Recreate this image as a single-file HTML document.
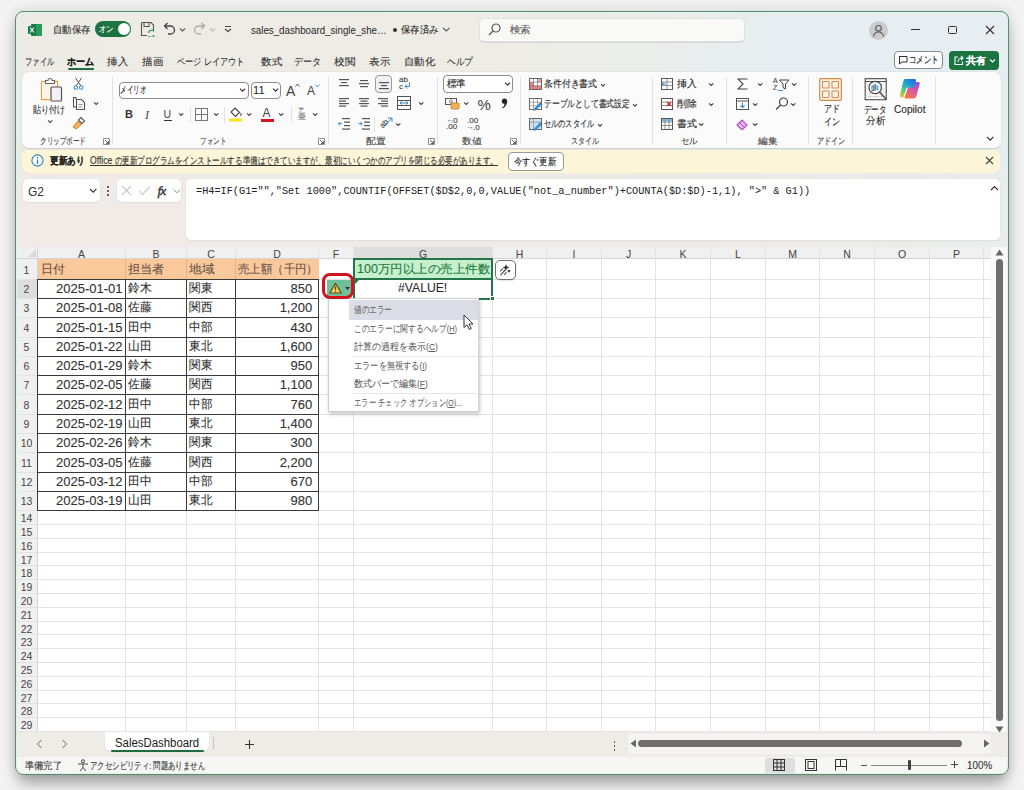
<!DOCTYPE html><html><head><meta charset="utf-8"><style>
*{box-sizing:border-box;margin:0;padding:0}
html,body{width:1024px;height:790px;overflow:hidden}
body{position:relative;background:#f3f3f3;font-family:"Liberation Sans",sans-serif;color:#262626}
.abs{position:absolute}
.win{position:absolute;left:15px;top:11px;width:994px;height:764px;border-radius:8px;
 background:linear-gradient(90deg,#edebe5 0%,#eeece5 45%,#ebedea 62%,#e6eef1 78%,#e6eef1 100%);box-shadow:0 12px 16px -4px rgba(0,0,0,.32),0 0 14px rgba(0,0,0,.14)}
.t{position:absolute;white-space:nowrap;-webkit-text-stroke:0.12px currentColor}
</style></head><body>
<div class="win"></div><div style="position:absolute;left:0;top:0;width:1024px;height:790px;clip-path:inset(12px 16px 16px 16px round 7px)">
<svg class="abs" style="left:28px;top:24px;" width="14" height="12" viewBox="0 0 14 12"><rect x="3" y="0" width="11" height="12" rx="1" fill="#1f7a45"/><rect x="8" y="0" width="6" height="12" fill="#2a9a5a"/><rect x="0" y="2" width="8" height="8" rx="1" fill="#107c41"/><path d="M2 3.5 L6 8.5 M6 3.5 L2 8.5" stroke="#fff" stroke-width="1.2"/></svg>
<div class="t" id="f1" style="left:52.82px;top:24.75px;font-size:9.5px;height:9.5px;line-height:9.5px;color:#2b2b2b;;transform:scaleX(0.9363);transform-origin:0 0;">自動保存</div>
<div class="abs" style="left:95px;top:21px;width:36px;height:16px;background:#1b7340;border-radius:8px"></div>
<div class="t" id="f2" style="left:98.55px;top:24.50px;font-size:9px;height:9px;line-height:9px;color:#ffffff;;transform:scaleX(0.8278);transform-origin:0 0;">オン</div>
<div class="abs" style="left:118px;top:23px;width:12px;height:12px;background:#fff;border-radius:6px"></div>
<svg class="abs" style="left:140px;top:21px;" width="15" height="16" viewBox="0 0 15 16"><path d="M1.5 1.5 H11 L13.5 4 V10" fill="none" stroke="#555" stroke-width="1.1"/><path d="M1.5 1.5 V14.5 H7" fill="none" stroke="#555" stroke-width="1.1"/><rect x="4" y="1.5" width="5" height="4" fill="none" stroke="#555" stroke-width="1"/><path d="M8.5 12 a3 3 0 0 1 5.5 -1.5 M14 14 a3 3 0 0 1 -5.5 1" fill="none" stroke="#3a9a5a" stroke-width="1.3"/></svg>
<svg class="abs" style="left:162px;top:21px;" width="14" height="16" viewBox="0 0 14 16"><path d="M3 5 H8.5 a4 4 0 0 1 0 8 H6" fill="none" stroke="#444" stroke-width="1.3"/><path d="M5.5 2 L2.5 5 L5.5 8" fill="none" stroke="#444" stroke-width="1.3"/></svg>
<svg class="abs" style="left:178.5px;top:26.5px;" width="7.0" height="5.0" viewBox="0 0 7.0 5.0"><path d="M1 1.5 L3.5 4.0 L6.0 1.5" fill="none" stroke="#555" stroke-width="1.1"/></svg>
<svg class="abs" style="left:193px;top:21px;" width="14" height="16" viewBox="0 0 14 16"><path d="M11 5 H5.5 a4 4 0 0 0 0 8 H8" fill="none" stroke="#aaa" stroke-width="1.3"/><path d="M8.5 2 L11.5 5 L8.5 8" fill="none" stroke="#aaa" stroke-width="1.3"/></svg>
<svg class="abs" style="left:208.5px;top:26.5px;" width="7.0" height="5.0" viewBox="0 0 7.0 5.0"><path d="M1 1.5 L3.5 4.0 L6.0 1.5" fill="none" stroke="#bbb" stroke-width="1.1"/></svg>
<svg class="abs" style="left:224px;top:25px;" width="8" height="8" viewBox="0 0 8 8"><path d="M1 1.5 H7" stroke="#444" stroke-width="1"/><path d="M1 4 L4 6.5 L7 4" fill="none" stroke="#444" stroke-width="1.1"/></svg>
<div class="t" id="f3" style="left:250.83px;top:24.75px;font-size:11.5px;height:11.5px;line-height:11.5px;color:#262626;-webkit-text-stroke:0;transform:scaleX(0.8459);transform-origin:0 0;">sales_dashboard_single_she…</div>
<div class="abs" style="left:393px;top:28px;width:4px;height:4px;background:#333;border-radius:2px"></div>
<div class="t" id="f4" style="left:400.52px;top:24.75px;font-size:9.5px;height:9.5px;line-height:9.5px;color:#262626;;transform:scaleX(0.9363);transform-origin:0 0;">保存済み</div>
<svg class="abs" style="left:441.8px;top:25.8px;" width="8.4" height="6.4" viewBox="0 0 8.4 6.4"><path d="M1 1.9 L4.2 5.1 L7.4 1.9" fill="none" stroke="#444" stroke-width="1.1"/></svg>
<div class="abs" style="left:479px;top:18px;width:266px;height:24px;background:#f9f9f8;border:1px solid #e0e0de;border-radius:5px;box-shadow:0 1px 0 #d8d8d6"></div>
<svg class="abs" style="left:488px;top:23px;" width="13" height="13" viewBox="0 0 13 13"><circle cx="8" cy="5" r="4" fill="none" stroke="#555" stroke-width="1.2"/><path d="M5 8 L1 12" stroke="#555" stroke-width="1.3"/></svg>
<div class="t" id="f5" style="left:509.52px;top:25.25px;font-size:9.5px;height:9.5px;line-height:9.5px;color:#555;;transform:scaleX(1.0475);transform-origin:0 0;">検索</div>
<div class="abs" style="left:869px;top:21px;width:19px;height:19px;background:#c9cbcc;border-radius:50%"></div>
<svg class="abs" style="left:872px;top:24px;" width="13" height="13" viewBox="0 0 13 13"><circle cx="6.5" cy="4.3" r="2.8" fill="none" stroke="#555" stroke-width="1.1"/><path d="M1.5 12.5 a5 4.5 0 0 1 10 0" fill="none" stroke="#555" stroke-width="1.1"/></svg>
<div class="abs" style="left:911px;top:29px;width:9px;height:1px;background:#333"></div>
<div class="abs" style="left:948px;top:26px;width:9px;height:8px;border:1.2px solid #333;border-radius:1.5px"></div>
<svg class="abs" style="left:985px;top:25px;" width="10" height="10" viewBox="0 0 10 10"><path d="M1 1 L9 9 M9 1 L1 9" stroke="#333" stroke-width="1.1"/></svg>
<div class="t" id="f6" style="left:24.5px;top:56.50px;font-size:10px;height:10px;line-height:10px;color:#333;;transform:scaleX(0.7375);transform-origin:0 0;">ファイル</div>
<div class="t" id="f7" style="left:67.0px;top:56.50px;font-size:10px;height:10px;line-height:10px;color:#1a1a1a;font-weight:bold;transform:scaleX(0.9000);transform-origin:0 0;">ホーム</div>
<div class="t" id="f8" style="left:107.0px;top:56.50px;font-size:10px;height:10px;line-height:10px;color:#333;;transform:scaleX(1.0500);transform-origin:0 0;">挿入</div>
<div class="t" id="f9" style="left:142.0px;top:56.50px;font-size:10px;height:10px;line-height:10px;color:#333;;transform:scaleX(1.0500);transform-origin:0 0;">描画</div>
<div class="t" id="f10" style="left:177.0px;top:56.50px;font-size:10px;height:10px;line-height:10px;color:#333;;transform:scaleX(0.8154);transform-origin:0 0;">ページ レイアウト</div>
<div class="t" id="f11" style="left:260.5px;top:56.50px;font-size:10px;height:10px;line-height:10px;color:#333;;transform:scaleX(1.0500);transform-origin:0 0;">数式</div>
<div class="t" id="f12" style="left:293.5px;top:56.50px;font-size:10px;height:10px;line-height:10px;color:#333;;transform:scaleX(0.9000);transform-origin:0 0;">データ</div>
<div class="t" id="f13" style="left:333.5px;top:56.50px;font-size:10px;height:10px;line-height:10px;color:#333;;transform:scaleX(1.0500);transform-origin:0 0;">校閲</div>
<div class="t" id="f14" style="left:368.5px;top:56.50px;font-size:10px;height:10px;line-height:10px;color:#333;;transform:scaleX(1.0500);transform-origin:0 0;">表示</div>
<div class="t" id="f15" style="left:403.5px;top:56.50px;font-size:10px;height:10px;line-height:10px;color:#333;;transform:scaleX(1.0333);transform-origin:0 0;">自動化</div>
<div class="t" id="f16" style="left:447.0px;top:56.50px;font-size:10px;height:10px;line-height:10px;color:#333;;transform:scaleX(0.8667);transform-origin:0 0;">ヘルプ</div>
<div class="abs" style="left:68px;top:67.5px;width:26px;height:2.5px;background:#1d6b3e;border-radius:1px"></div>
<div class="abs" style="left:894px;top:51px;width:49px;height:18px;background:#fbfbfb;border:1px solid #8a8a8a;border-radius:4px"></div>
<svg class="abs" style="left:898px;top:55px;" width="10" height="10" viewBox="0 0 10 10"><path d="M1 1.5 H9 V7 H4 L1.5 9 V1.5 Z" fill="none" stroke="#333" stroke-width="1"/></svg>
<div class="t" id="f17" style="left:908.52px;top:55.25px;font-size:9.5px;height:9.5px;line-height:9.5px;color:#222;;transform:scaleX(0.7488);transform-origin:0 0;">コメント</div>
<div class="abs" style="left:949px;top:51px;width:50px;height:19px;background:#1b7340;border-radius:4px"></div>
<svg class="abs" style="left:953px;top:55px;" width="11" height="11" viewBox="0 0 11 11"><path d="M5 2 H2 V9.5 H9.5 V6.5" fill="none" stroke="#fff" stroke-width="1.1"/><path d="M5 7 a4 4 0 0 1 4 -4 H10 M8 1 L10 3 L8 5" fill="none" stroke="#fff" stroke-width="1.1"/></svg>
<div class="t" id="f18" style="left:965.5px;top:55.50px;font-size:10px;height:10px;line-height:10px;color:#fff;font-weight:bold;transform:scaleX(1.0000);transform-origin:0 0;">共有</div>
<svg class="abs" style="left:988.5px;top:57.5px;" width="7.0" height="5.0" viewBox="0 0 7.0 5.0"><path d="M1 1.5 L3.5 4.0 L6.0 1.5" fill="none" stroke="#fff" stroke-width="1.1"/></svg>
<div class="abs" style="left:22px;top:72px;width:979px;height:76px;background:#fbfbfb;border-radius:7px;box-shadow:0 0.5px 1.5px rgba(0,0,0,.15)"></div>
<div class="abs" style="left:111.5px;top:77px;width:1px;height:67px;background:#e1e1e1"></div>
<div class="abs" style="left:328px;top:77px;width:1px;height:67px;background:#e1e1e1"></div>
<div class="abs" style="left:437px;top:77px;width:1px;height:67px;background:#e1e1e1"></div>
<div class="abs" style="left:520px;top:77px;width:1px;height:67px;background:#e1e1e1"></div>
<div class="abs" style="left:652px;top:77px;width:1px;height:67px;background:#e1e1e1"></div>
<div class="abs" style="left:726px;top:77px;width:1px;height:67px;background:#e1e1e1"></div>
<div class="abs" style="left:808px;top:77px;width:1px;height:67px;background:#e1e1e1"></div>
<div class="abs" style="left:852px;top:77px;width:1px;height:67px;background:#e1e1e1"></div>
<div class="abs" style="left:934.5px;top:77px;width:1px;height:67px;background:#e1e1e1"></div>
<div class="t" id="f19" style="left:39.95px;top:137.00px;font-size:9px;height:9px;line-height:9px;color:#444;;transform:scaleX(0.7286);transform-origin:0 0;">クリップボード</div>
<div class="t" id="f20" style="left:199.95px;top:137.00px;font-size:9px;height:9px;line-height:9px;color:#444;;transform:scaleX(0.7361);transform-origin:0 0;">フォント</div>
<div class="t" id="f21" style="left:366.15px;top:137.00px;font-size:9px;height:9px;line-height:9px;color:#444;;transform:scaleX(1.0944);transform-origin:0 0;">配置</div>
<div class="t" id="f22" style="left:461.55px;top:137.00px;font-size:9px;height:9px;line-height:9px;color:#444;;transform:scaleX(1.0889);transform-origin:0 0;">数値</div>
<div class="t" id="f23" style="left:570.85px;top:137.00px;font-size:9px;height:9px;line-height:9px;color:#444;;transform:scaleX(0.7806);transform-origin:0 0;">スタイル</div>
<div class="t" id="f24" style="left:680.55px;top:137.00px;font-size:9px;height:9px;line-height:9px;color:#444;;transform:scaleX(0.9389);transform-origin:0 0;">セル</div>
<div class="t" id="f25" style="left:758.05px;top:137.00px;font-size:9px;height:9px;line-height:9px;color:#444;;transform:scaleX(1.0778);transform-origin:0 0;">編集</div>
<div class="t" id="f26" style="left:816.55px;top:137.00px;font-size:9px;height:9px;line-height:9px;color:#444;;transform:scaleX(0.7889);transform-origin:0 0;">アドイン</div>
<svg class="abs" style="left:103px;top:138px;" width="7" height="7" viewBox="0 0 7 7"><path d="M0.5 0.5 H6.5 V6.5 H0.5 Z" fill="none" stroke="#777" stroke-width=".8"/><path d="M2 2 L5.5 5.5 M5.5 3 V5.5 H3" fill="none" stroke="#555" stroke-width=".9"/></svg>
<svg class="abs" style="left:318px;top:138px;" width="7" height="7" viewBox="0 0 7 7"><path d="M0.5 0.5 H6.5 V6.5 H0.5 Z" fill="none" stroke="#777" stroke-width=".8"/><path d="M2 2 L5.5 5.5 M5.5 3 V5.5 H3" fill="none" stroke="#555" stroke-width=".9"/></svg>
<svg class="abs" style="left:428px;top:138px;" width="7" height="7" viewBox="0 0 7 7"><path d="M0.5 0.5 H6.5 V6.5 H0.5 Z" fill="none" stroke="#777" stroke-width=".8"/><path d="M2 2 L5.5 5.5 M5.5 3 V5.5 H3" fill="none" stroke="#555" stroke-width=".9"/></svg>
<svg class="abs" style="left:510px;top:138px;" width="7" height="7" viewBox="0 0 7 7"><path d="M0.5 0.5 H6.5 V6.5 H0.5 Z" fill="none" stroke="#777" stroke-width=".8"/><path d="M2 2 L5.5 5.5 M5.5 3 V5.5 H3" fill="none" stroke="#555" stroke-width=".9"/></svg>
<svg class="abs" style="left:39px;top:77px;" width="24" height="26" viewBox="0 0 24 26"><path d="M2.5 4.5 H7 M15 4.5 H18.5 V10" fill="none" stroke="#e5a44a" stroke-width="1.3"/><path d="M2.5 4.5 V22.5 H11" fill="none" stroke="#e5a44a" stroke-width="1.3"/><rect x="3.2" y="5.2" width="14.6" height="16.6" fill="#fdf5e8"/><path d="M6.5 6.5 V3.5 H9 a2 2 0 0 1 4 0 H15.5 V6.5 Z" fill="#fff" stroke="#666" stroke-width="1.1"/><rect x="12" y="10" width="10.5" height="14" rx="1" fill="#f2f2f7" stroke="#555" stroke-width="1.2"/></svg>
<div class="t" id="f27" style="left:32.92px;top:105.45px;font-size:9.5px;height:9.5px;line-height:9.5px;color:#333;;transform:scaleX(0.8037);transform-origin:0 0;">貼り付け</div>
<svg class="abs" style="left:46.8px;top:119.3px;" width="6.4" height="4.4" viewBox="0 0 6.4 4.4"><path d="M1 1.3 L3.2 3.5 L5.4 1.3" fill="none" stroke="#444" stroke-width="1.1"/></svg>
<svg class="abs" style="left:73px;top:77px;" width="11" height="13" viewBox="0 0 11 13"><path d="M2.5 1 L8 9 M8.5 1 L3 9" stroke="#555" stroke-width="1"/><circle cx="2.8" cy="10.5" r="1.8" fill="none" stroke="#3d8ec9" stroke-width="1.1"/><circle cx="8.2" cy="10.5" r="1.8" fill="none" stroke="#3d8ec9" stroke-width="1.1"/></svg>
<svg class="abs" style="left:72px;top:96px;" width="14" height="15" viewBox="0 0 14 15"><path d="M4 3 V1.5 H1.5 V11 H4" fill="none" stroke="#555" stroke-width="1.1"/><path d="M4.5 3.5 H9.5 L12.5 6.5 V13.5 H4.5 Z" fill="none" stroke="#555" stroke-width="1.1"/><path d="M6.5 8.5 H10.5 M6.5 11 H10.5" stroke="#777" stroke-width=".8"/></svg>
<svg class="abs" style="left:93.3px;top:101.3px;" width="6.4" height="4.4" viewBox="0 0 6.4 4.4"><path d="M1 1.3 L3.2 3.5 L5.4 1.3" fill="none" stroke="#444" stroke-width="1.1"/></svg>
<svg class="abs" style="left:72px;top:116px;" width="14" height="14" viewBox="0 0 14 14"><path d="M9 1.5 L12.5 5 L10 7.5 L6.5 4 Z" fill="#fff" stroke="#555" stroke-width="1.1"/><path d="M6 5 L1 11 L4 13 L9.5 8.5 Z" fill="#f2b05a" stroke="#c77a1a" stroke-width=".9"/></svg>
<div class="abs" style="left:119px;top:81.5px;width:130px;height:17.5px;background:#fff;border:1px solid #8c8c8c;border-radius:4px"></div>
<div class="t" id="f28" style="left:120.23px;top:85.25px;font-size:9.5px;height:9.5px;line-height:9.5px;color:#222;;transform:scaleX(0.6562);transform-origin:0 0;">メイリオ</div>
<svg class="abs" style="left:239.4px;top:87.4px;" width="7.2" height="5.2" viewBox="0 0 7.2 5.2"><path d="M1 1.6 L3.6 4.2 L6.2 1.6" fill="none" stroke="#333" stroke-width="1.1"/></svg>
<div class="abs" style="left:251px;top:81.5px;width:30px;height:17.5px;background:#fff;border:1px solid #8c8c8c;border-radius:4px"></div>
<div class="t" id="f29" style="left:252.95px;top:85.00px;font-size:11px;height:11px;line-height:11px;color:#222;-webkit-text-stroke:0;transform:scaleX(1.0156);transform-origin:0 0;">11</div>
<svg class="abs" style="left:272.4px;top:87.4px;" width="7.2" height="5.2" viewBox="0 0 7.2 5.2"><path d="M1 1.6 L3.6 4.2 L6.2 1.6" fill="none" stroke="#333" stroke-width="1.1"/></svg>
<div class="t" style="left:286px;top:83.50px;font-size:14px;height:14px;line-height:14px;color:#444;-webkit-text-stroke:0;">A</div>
<svg class="abs" style="left:295px;top:83px;" width="5" height="4" viewBox="0 0 5 4"><path d="M0.5 3.5 L2.5 1 L4.5 3.5" fill="none" stroke="#444" stroke-width=".9"/></svg>
<div class="t" style="left:307px;top:85.00px;font-size:12px;height:12px;line-height:12px;color:#444;-webkit-text-stroke:0;">A</div>
<svg class="abs" style="left:315px;top:84px;" width="5" height="4" viewBox="0 0 5 4"><path d="M0.5 0.5 L2.5 3 L4.5 0.5" fill="none" stroke="#3d8ec9" stroke-width=".9"/></svg>
<div class="t" style="left:125px;top:109.00px;font-size:11px;height:11px;line-height:11px;color:#333;font-weight:bold;-webkit-text-stroke:0;">B</div>
<div class="t" style="left:145px;top:108.50px;font-size:12px;height:12px;line-height:12px;color:#444;font-style:italic;font-family:'Liberation Serif',serif;-webkit-text-stroke:0;">I</div>
<div class="t" style="left:163.5px;top:108.75px;font-size:10.5px;height:10.5px;line-height:10.5px;color:#444;-webkit-text-stroke:0;">U</div>
<div class="abs" style="left:163.5px;top:120px;width:8px;height:1px;background:#333"></div>
<svg class="abs" style="left:178.3px;top:111.8px;" width="6.4" height="4.4" viewBox="0 0 6.4 4.4"><path d="M1 1.3 L3.2 3.5 L5.4 1.3" fill="none" stroke="#444" stroke-width="1.1"/></svg>
<div class="abs" style="left:190px;top:107px;width:1px;height:16px;background:#e1e1e1"></div>
<svg class="abs" style="left:195px;top:108px;" width="13" height="13" viewBox="0 0 13 13"><rect x="0.5" y="0.5" width="12" height="12" fill="none" stroke="#777" stroke-width="1"/><path d="M6.5 0.5 V12.5 M0.5 6.5 H12.5" stroke="#777" stroke-width="1"/></svg>
<svg class="abs" style="left:212.8px;top:111.8px;" width="6.4" height="4.4" viewBox="0 0 6.4 4.4"><path d="M1 1.3 L3.2 3.5 L5.4 1.3" fill="none" stroke="#444" stroke-width="1.1"/></svg>
<div class="abs" style="left:224px;top:107px;width:1px;height:16px;background:#e1e1e1"></div>
<svg class="abs" style="left:229px;top:106px;" width="14" height="16" viewBox="0 0 14 16"><path d="M6 2 L10.5 6.5 L6.5 10.5 L2 6 Z" fill="#fff" stroke="#444" stroke-width="1.1"/><path d="M11.5 7 q1.5 2 0 3" fill="none" stroke="#444" stroke-width="1"/><rect x="0" y="12.5" width="13" height="3" fill="#f7e51e"/></svg>
<svg class="abs" style="left:246.3px;top:111.8px;" width="6.4" height="4.4" viewBox="0 0 6.4 4.4"><path d="M1 1.3 L3.2 3.5 L5.4 1.3" fill="none" stroke="#444" stroke-width="1.1"/></svg>
<div class="t" style="left:262.5px;top:106.50px;font-size:12px;height:12px;line-height:12px;color:#444;-webkit-text-stroke:0;">A</div>
<div class="abs" style="left:261px;top:118.5px;width:13px;height:3px;background:#d3161f"></div>
<svg class="abs" style="left:277.8px;top:111.8px;" width="6.4" height="4.4" viewBox="0 0 6.4 4.4"><path d="M1 1.3 L3.2 3.5 L5.4 1.3" fill="none" stroke="#444" stroke-width="1.1"/></svg>
<div class="abs" style="left:291px;top:107px;width:1px;height:16px;background:#e1e1e1"></div>
<div class="t" style="left:298px;top:106.50px;font-size:6px;height:6px;line-height:6px;color:#666;;">ア</div>
<div class="t" style="left:297.5px;top:113.00px;font-size:8px;height:8px;line-height:8px;color:#666;;">亜</div>
<svg class="abs" style="left:311.8px;top:111.8px;" width="6.4" height="4.4" viewBox="0 0 6.4 4.4"><path d="M1 1.3 L3.2 3.5 L5.4 1.3" fill="none" stroke="#444" stroke-width="1.1"/></svg>
<svg class="abs" style="left:338.5px;top:79px;" width="14" height="11" viewBox="0 0 14 11"><rect x="0" y="0" width="10" height="1.2" fill="#555"/><rect x="2" y="3" width="6" height="1.2" fill="#555"/><rect x="0" y="6" width="10" height="1.2" fill="#555"/></svg>
<svg class="abs" style="left:359px;top:80px;" width="14" height="11" viewBox="0 0 14 11"><rect x="1" y="0" width="8" height="1.2" fill="#555"/><rect x="0" y="3" width="10" height="1.2" fill="#555"/><rect x="1" y="6" width="8" height="1.2" fill="#555"/></svg>
<div class="abs" style="left:374.5px;top:75px;width:17px;height:17.5px;background:#f0f0f0;border:1px solid #9a9a9a;border-radius:4px"></div>
<svg class="abs" style="left:378.5px;top:82px;" width="14" height="11" viewBox="0 0 14 11"><rect x="0" y="0" width="10" height="1.2" fill="#555"/><rect x="2" y="3" width="6" height="1.2" fill="#555"/><rect x="0" y="6" width="10" height="1.2" fill="#555"/></svg>
<div class="t" style="left:399px;top:75.50px;font-size:8px;height:8px;line-height:8px;color:#444;;">ab</div>
<div class="t" style="left:399px;top:82.50px;font-size:8px;height:8px;line-height:8px;color:#444;;">c</div>
<svg class="abs" style="left:403px;top:82px;" width="8" height="9" viewBox="0 0 8 9"><path d="M6.5 0.5 V4.5 H2 M4 2.5 L2 4.5 L4 6.5" fill="none" stroke="#3d8ec9" stroke-width="1"/></svg>
<svg class="abs" style="left:338.5px;top:98px;" width="14" height="12.0" viewBox="0 0 14 12.0"><rect x="0" y="0.0" width="10" height="1.2" fill="#555"/><rect x="0" y="2.5" width="7" height="1.2" fill="#555"/><rect x="0" y="5.0" width="10" height="1.2" fill="#555"/><rect x="0" y="7.5" width="7" height="1.2" fill="#555"/></svg>
<svg class="abs" style="left:358.5px;top:98px;" width="14" height="12.0" viewBox="0 0 14 12.0"><rect x="0" y="0.0" width="10" height="1.2" fill="#555"/><rect x="1.5" y="2.5" width="7" height="1.2" fill="#555"/><rect x="0" y="5.0" width="10" height="1.2" fill="#555"/><rect x="1.5" y="7.5" width="7" height="1.2" fill="#555"/></svg>
<svg class="abs" style="left:378px;top:98px;" width="14" height="12.0" viewBox="0 0 14 12.0"><rect x="0" y="0.0" width="10" height="1.2" fill="#555"/><rect x="3" y="2.5" width="7" height="1.2" fill="#555"/><rect x="0" y="5.0" width="10" height="1.2" fill="#555"/><rect x="3" y="7.5" width="7" height="1.2" fill="#555"/></svg>
<svg class="abs" style="left:397px;top:96px;" width="14" height="14" viewBox="0 0 14 14"><rect x="0.5" y="0.5" width="13" height="13" fill="none" stroke="#555" stroke-width="1"/><path d="M0.5 4.5 H13.5 M0.5 9.5 H13.5" stroke="#555" stroke-width="1"/><path d="M3 7 H11 M5 5.5 L3 7 L5 8.5 M9 5.5 L11 7 L9 8.5" fill="none" stroke="#3d8ec9" stroke-width="1"/></svg>
<svg class="abs" style="left:417.8px;top:100.8px;" width="6.4" height="4.4" viewBox="0 0 6.4 4.4"><path d="M1 1.3 L3.2 3.5 L5.4 1.3" fill="none" stroke="#444" stroke-width="1.1"/></svg>
<svg class="abs" style="left:338px;top:118px;" width="12" height="12" viewBox="0 0 12 12"><rect x="4" y="0" width="8" height="1.2" fill="#555"/><rect x="6" y="3.5" width="6" height="1.2" fill="#555"/><rect x="6" y="7" width="6" height="1.2" fill="#555"/><rect x="4" y="10.5" width="8" height="1.2" fill="#555"/><path d="M0.5 5.7 H4 M2 4 L0.5 5.7 L2 7.4" fill="none" stroke="#3d8ec9" stroke-width="1"/></svg>
<svg class="abs" style="left:358px;top:118px;" width="12" height="12" viewBox="0 0 12 12"><rect x="4" y="0" width="8" height="1.2" fill="#555"/><rect x="6" y="3.5" width="6" height="1.2" fill="#555"/><rect x="6" y="7" width="6" height="1.2" fill="#555"/><rect x="4" y="10.5" width="8" height="1.2" fill="#555"/><path d="M0.5 5.7 H4 M2.5 4 L4 5.7 L2.5 7.4" fill="none" stroke="#3d8ec9" stroke-width="1"/></svg>
<div class="abs" style="left:374px;top:116px;width:1px;height:16px;background:#e1e1e1"></div>
<div class="t" style="left:380px;top:120.00px;font-size:8px;height:8px;line-height:8px;color:#444;transform:rotate(-45deg);">ab</div>
<svg class="abs" style="left:384px;top:117px;" width="9" height="9" viewBox="0 0 9 9"><path d="M1 8 L8 1 M4 1 H8 V5" fill="none" stroke="#3d8ec9" stroke-width="1"/></svg>
<svg class="abs" style="left:395.3px;top:121.8px;" width="6.4" height="4.4" viewBox="0 0 6.4 4.4"><path d="M1 1.3 L3.2 3.5 L5.4 1.3" fill="none" stroke="#444" stroke-width="1.1"/></svg>
<div class="abs" style="left:443px;top:74.5px;width:70px;height:18px;background:#fff;border:1px solid #8c8c8c;border-radius:4px"></div>
<div class="t" id="f30" style="left:446.52px;top:78.75px;font-size:9.5px;height:9.5px;line-height:9.5px;color:#222;;transform:scaleX(0.9475);transform-origin:0 0;">標準</div>
<svg class="abs" style="left:504.4px;top:80.9px;" width="7.2" height="5.2" viewBox="0 0 7.2 5.2"><path d="M1 1.6 L3.6 4.2 L6.2 1.6" fill="none" stroke="#333" stroke-width="1.1"/></svg>
<svg class="abs" style="left:445px;top:97px;" width="15" height="13" viewBox="0 0 15 13"><rect x="0.5" y="1.5" width="11" height="6" fill="none" stroke="#555" stroke-width="1"/><circle cx="6" cy="4.5" r="1.5" fill="none" stroke="#555" stroke-width=".8"/><rect x="6" y="6" width="8" height="6" rx="1" fill="#f2b05a" stroke="#c77a1a" stroke-width=".8"/></svg>
<svg class="abs" style="left:463.3px;top:101.3px;" width="6.4" height="4.4" viewBox="0 0 6.4 4.4"><path d="M1 1.3 L3.2 3.5 L5.4 1.3" fill="none" stroke="#444" stroke-width="1.1"/></svg>
<div class="t" style="left:477.5px;top:96.50px;font-size:15px;height:15px;line-height:15px;color:#444;-webkit-text-stroke:0;">%</div>
<svg class="abs" style="left:501px;top:98px;" width="7" height="11" viewBox="0 0 7 11"><circle cx="3.5" cy="3.2" r="2.6" fill="#222"/><path d="M5.9 3.5 Q6 8 1.5 10.5 L1.2 9.8 Q3.8 8 3.8 5 Z" fill="#222"/></svg>
<div class="t" style="left:446px;top:116.00px;font-size:8px;height:8px;line-height:8px;color:#3d8ec9;;">←</div>
<div class="t" style="left:451px;top:116.50px;font-size:8px;height:8px;line-height:8px;color:#444;;">.0</div>
<div class="t" style="left:446px;top:123.00px;font-size:8px;height:8px;line-height:8px;color:#444;;">.00</div>
<div class="t" style="left:467px;top:116.50px;font-size:8px;height:8px;line-height:8px;color:#444;;">.00</div>
<div class="t" style="left:465.5px;top:123.00px;font-size:8px;height:8px;line-height:8px;color:#3d8ec9;;">→</div>
<div class="t" style="left:473px;top:123.50px;font-size:8px;height:8px;line-height:8px;color:#444;;">.0</div>
<svg class="abs" style="left:528.5px;top:78px;" width="13" height="12" viewBox="0 0 13 12"><rect x="0.5" y="0.5" width="12" height="11" fill="#fff" stroke="#666" stroke-width="1"/><rect x="1" y="4.2" width="3.5" height="7" fill="#f08080"/><rect x="4.5" y="7.8" width="7.5" height="3.4" fill="#f08080"/><rect x="8.5" y="1" width="3.5" height="3.2" fill="#f4a0a0"/><path d="M0.5 4.2 H12.5 M0.5 7.8 H12.5 M4.5 0.5 V11.5 M8.5 0.5 V11.5" stroke="#777" stroke-width=".7"/><rect x="0.5" y="0.5" width="12" height="11" fill="none" stroke="#666" stroke-width="1"/></svg>
<div class="t" id="f31" style="left:543.82px;top:79.25px;font-size:9.5px;height:9.5px;line-height:9.5px;color:#262626;;transform:scaleX(0.8842);transform-origin:0 0;">条件付き書式</div>
<svg class="abs" style="left:599.5px;top:82.5px;" width="6" height="4" viewBox="0 0 6 4"><path d="M1 1.2 L3 3.2 L5 1.2" fill="none" stroke="#444" stroke-width="1.1"/></svg>
<svg class="abs" style="left:528.5px;top:98px;" width="14" height="13" viewBox="0 0 14 13"><rect x="0.5" y="0.5" width="12" height="11" fill="#fff" stroke="#666" stroke-width="1"/><path d="M0.5 4.2 H12.5 M0.5 7.8 H12.5 M4.5 0.5 V11.5 M8.5 0.5 V11.5" stroke="#888" stroke-width=".7"/><path d="M4 11.5 L11 4.5 L13 6.5 L6.5 12.5 H4 Z" fill="#3a8ed6"/><path d="M11 4.5 L13 6.5" stroke="#555" stroke-width="1"/></svg>
<div class="t" id="f32" style="left:543.82px;top:99.00px;font-size:9.5px;height:9.5px;line-height:9.5px;color:#262626;;transform:scaleX(0.7805);transform-origin:0 0;">テーブルとして書式設定</div>
<svg class="abs" style="left:632px;top:102.5px;" width="6" height="4" viewBox="0 0 6 4"><path d="M1 1.2 L3 3.2 L5 1.2" fill="none" stroke="#444" stroke-width="1.1"/></svg>
<svg class="abs" style="left:528.5px;top:118px;" width="14" height="13" viewBox="0 0 14 13"><rect x="0.5" y="0.5" width="12" height="11" fill="#cfe3f5" stroke="#666" stroke-width="1"/><path d="M0.5 4.2 H12.5 M4.5 0.5 V11.5" stroke="#888" stroke-width=".7"/><path d="M4 11.5 L11 4.5 L13 6.5 L6.5 12.5 H4 Z" fill="#3a8ed6"/><path d="M11 4.5 L13 6.5" stroke="#555" stroke-width="1"/></svg>
<div class="t" id="f33" style="left:543.82px;top:119.00px;font-size:9.5px;height:9.5px;line-height:9.5px;color:#262626;;transform:scaleX(0.7164);transform-origin:0 0;">セルのスタイル</div>
<svg class="abs" style="left:597.3px;top:122.5px;" width="6" height="4" viewBox="0 0 6 4"><path d="M1 1.2 L3 3.2 L5 1.2" fill="none" stroke="#444" stroke-width="1.1"/></svg>
<svg class="abs" style="left:661px;top:77.5px;" width="13" height="13" viewBox="0 0 13 13"><rect x="0.5" y="0.5" width="11" height="11" fill="#fff" stroke="#555" stroke-width="1"/><path d="M0.5 4 H11.5 M0.5 7.5 H11.5 M6 0.5 V11.5" stroke="#777" stroke-width=".8"/><path d="M1 6 H5 M3 4.2 L1 6 L3 7.8" fill="none" stroke="#3d8ec9" stroke-width="1"/></svg>
<div class="t" id="f34" style="left:676.52px;top:79.25px;font-size:9.5px;height:9.5px;line-height:9.5px;color:#262626;;transform:scaleX(0.9975);transform-origin:0 0;">挿入</div>
<svg class="abs" style="left:707.8px;top:81.8px;" width="6.4" height="4.4" viewBox="0 0 6.4 4.4"><path d="M1 1.3 L3.2 3.5 L5.4 1.3" fill="none" stroke="#444" stroke-width="1.1"/></svg>
<svg class="abs" style="left:661px;top:97.5px;" width="13" height="13" viewBox="0 0 13 13"><rect x="0.5" y="0.5" width="11" height="11" fill="#fff" stroke="#555" stroke-width="1"/><path d="M0.5 4 H11.5 M0.5 7.5 H11.5" stroke="#777" stroke-width=".8"/><path d="M6 4 L10 8 M10 4 L6 8" stroke="#d3161f" stroke-width="1.1"/></svg>
<div class="t" id="f35" style="left:676.52px;top:99.25px;font-size:9.5px;height:9.5px;line-height:9.5px;color:#262626;;transform:scaleX(0.9975);transform-origin:0 0;">削除</div>
<svg class="abs" style="left:707.8px;top:101.8px;" width="6.4" height="4.4" viewBox="0 0 6.4 4.4"><path d="M1 1.3 L3.2 3.5 L5.4 1.3" fill="none" stroke="#444" stroke-width="1.1"/></svg>
<svg class="abs" style="left:661px;top:117.5px;" width="13" height="13" viewBox="0 0 13 13"><rect x="0.5" y="0.5" width="11" height="11" fill="#fff" stroke="#555" stroke-width="1"/><path d="M0.5 4 H11.5 M0.5 7.5 H11.5 M4 0.5 V11.5 M8 0.5 V11.5" stroke="#777" stroke-width=".8"/><rect x="1" y="1" width="10" height="2.5" fill="#3d8ec9" opacity=".6"/></svg>
<div class="t" id="f36" style="left:676.52px;top:119.25px;font-size:9.5px;height:9.5px;line-height:9.5px;color:#262626;;transform:scaleX(0.9975);transform-origin:0 0;">書式</div>
<svg class="abs" style="left:697.8px;top:121.8px;" width="6.4" height="4.4" viewBox="0 0 6.4 4.4"><path d="M1 1.3 L3.2 3.5 L5.4 1.3" fill="none" stroke="#444" stroke-width="1.1"/></svg>
<svg class="abs" style="left:737px;top:78px;" width="11" height="12" viewBox="0 0 11 12"><path d="M10.5 1 H1 L6 6 L1 11 H10.5" fill="none" stroke="#444" stroke-width="1.1"/></svg>
<svg class="abs" style="left:757.3px;top:81.8px;" width="6.4" height="4.4" viewBox="0 0 6.4 4.4"><path d="M1 1.3 L3.2 3.5 L5.4 1.3" fill="none" stroke="#444" stroke-width="1.1"/></svg>
<div class="t" style="left:773px;top:77.00px;font-size:7px;height:7px;line-height:7px;color:#444;;">A</div>
<div class="t" style="left:773px;top:84.00px;font-size:7px;height:7px;line-height:7px;color:#444;;">Z</div>
<svg class="abs" style="left:779px;top:79px;" width="11" height="11" viewBox="0 0 11 11"><path d="M0.5 1 H10 L6.5 5 V10 L4 8.5 V5 Z" fill="none" stroke="#444" stroke-width="1"/></svg>
<div class="abs" style="left:777.5px;top:90px;width:5px;height:1px;background:#3d8ec9"></div>
<svg class="abs" style="left:791.3px;top:81.8px;" width="6.4" height="4.4" viewBox="0 0 6.4 4.4"><path d="M1 1.3 L3.2 3.5 L5.4 1.3" fill="none" stroke="#444" stroke-width="1.1"/></svg>
<svg class="abs" style="left:735.5px;top:97.5px;" width="14" height="13" viewBox="0 0 14 13"><rect x="0.5" y="0.5" width="12" height="11" fill="#fff" stroke="#555" stroke-width="1"/><path d="M0.5 3 H12.5" stroke="#555" stroke-width="1"/><path d="M6.5 4.5 V9.5 M4.5 7.5 L6.5 9.5 L8.5 7.5" fill="none" stroke="#3d8ec9" stroke-width="1.1"/></svg>
<svg class="abs" style="left:752.3px;top:101.8px;" width="6.4" height="4.4" viewBox="0 0 6.4 4.4"><path d="M1 1.3 L3.2 3.5 L5.4 1.3" fill="none" stroke="#444" stroke-width="1.1"/></svg>
<svg class="abs" style="left:775px;top:97px;" width="14" height="14" viewBox="0 0 14 14"><circle cx="8.5" cy="5" r="4" fill="none" stroke="#444" stroke-width="1.2"/><path d="M5.5 8 L1 12.5" stroke="#444" stroke-width="1.3"/></svg>
<svg class="abs" style="left:790.3px;top:101.8px;" width="6.4" height="4.4" viewBox="0 0 6.4 4.4"><path d="M1 1.3 L3.2 3.5 L5.4 1.3" fill="none" stroke="#444" stroke-width="1.1"/></svg>
<svg class="abs" style="left:736px;top:118px;" width="13" height="12" viewBox="0 0 13 12"><path d="M5 1.5 L11.5 1.5 L8 10.5 H1.5 Z" transform="rotate(0)" fill="none"/><path d="M1 7 L6 2 L11 7 L6 12 Z" fill="#e3b8ef" stroke="#b544c8" stroke-width="1.1"/><path d="M3.5 4.5 L8.5 9.5" stroke="#b544c8" stroke-width="1"/></svg>
<svg class="abs" style="left:752.3px;top:121.8px;" width="6.4" height="4.4" viewBox="0 0 6.4 4.4"><path d="M1 1.3 L3.2 3.5 L5.4 1.3" fill="none" stroke="#444" stroke-width="1.1"/></svg>
<svg class="abs" style="left:819px;top:78px;" width="23" height="23" viewBox="0 0 23 23"><rect x="0.7" y="0.7" width="21.6" height="21.6" rx="1" fill="#fdf3ea" stroke="#d58a45" stroke-width="1.2"/><rect x="3.5" y="3.5" width="6.5" height="6.5" rx=".8" fill="none" stroke="#d58a45" stroke-width="1.1"/><rect x="13" y="3.5" width="6.5" height="6.5" rx=".8" fill="none" stroke="#d58a45" stroke-width="1.1"/><rect x="3.5" y="13" width="6.5" height="6.5" rx=".8" fill="none" stroke="#d58a45" stroke-width="1.1"/><rect x="13" y="13" width="6.5" height="6.5" rx=".8" fill="none" stroke="#d58a45" stroke-width="1.1"/></svg>
<div class="t" id="f37" style="left:824.02px;top:104.25px;font-size:9.5px;height:9.5px;line-height:9.5px;color:#262626;;transform:scaleX(0.7975);transform-origin:0 0;">アド</div>
<div class="t" id="f38" style="left:824.02px;top:116.75px;font-size:9.5px;height:9.5px;line-height:9.5px;color:#262626;;transform:scaleX(0.7975);transform-origin:0 0;">イン</div>
<svg class="abs" style="left:864px;top:77px;" width="24" height="24" viewBox="0 0 24 24"><rect x="1.2" y="1.7" width="21" height="21" fill="#fff" stroke="#444" stroke-width="1.1"/><path d="M1.2 4.5 H22.2" stroke="#444" stroke-width="1"/><path d="M1.2 8 H22.2 M1.2 12 H22.2 M1.2 16 H22.2 M1.2 19.5 H22.2 M6 4.5 V22.7 M12 4.5 V22.7 M17.5 4.5 V22.7" stroke="#ccc" stroke-width=".7"/><circle cx="11.2" cy="10.5" r="6.2" fill="#fff" stroke="#444" stroke-width="1.2"/><path d="M15.5 15 L22 22" stroke="#444" stroke-width="1.2"/><rect x="8" y="9" width="1.8" height="4.5" fill="none" stroke="#444" stroke-width=".8"/><rect x="10.3" y="7" width="1.9" height="6.5" fill="#3d8ec9"/><rect x="12.6" y="8.5" width="1.9" height="5" fill="#3d8ec9" opacity=".8"/></svg>
<div class="t" id="f39" style="left:864.32px;top:104.75px;font-size:9.5px;height:9.5px;line-height:9.5px;color:#262626;;transform:scaleX(0.7467);transform-origin:0 0;">データ</div>
<div class="t" id="f40" style="left:865.52px;top:116.00px;font-size:9.5px;height:9.5px;line-height:9.5px;color:#262626;;transform:scaleX(0.9625);transform-origin:0 0;">分析</div>
<svg class="abs" style="left:898px;top:78px;" width="24" height="22" viewBox="0 0 24 22"><defs><linearGradient id="cgl" x1="0.8" y1="0" x2="0.2" y2="1"><stop offset="0" stop-color="#1f6fe8"/><stop offset=".45" stop-color="#22b0c8"/><stop offset=".8" stop-color="#7ccf5a"/><stop offset="1" stop-color="#e8c23a"/></linearGradient><linearGradient id="cgr" x1="0.8" y1="0" x2="0.2" y2="1"><stop offset="0" stop-color="#8a4fe6"/><stop offset=".5" stop-color="#e0589e"/><stop offset="1" stop-color="#f47a3c"/></linearGradient><clipPath id="ctop"><rect x="0" y="0" width="24" height="9.5"/></clipPath></defs><path d="M8 1 H16 Q18.6 1 17.8 3.6 L13.2 17.5 Q12.5 19.5 10.5 19.5 H4 Q1.2 19.5 2 16.6 L5.4 3.4 Q6 1 8 1 Z" fill="url(#cgl)"/><path d="M13.5 3.5 H20 Q23 3.5 22.2 6.4 L18.8 18.6 Q18.2 21 16 21 H8 Q5.4 21 6.2 18.4 L10.8 5.5 Q11.5 3.5 13.5 3.5 Z" fill="url(#cgr)" stroke="#fff" stroke-width="1.2"/><path d="M8 1 H16 Q18.6 1 17.8 3.6 L13.2 17.5 Q12.5 19.5 10.5 19.5 H4 Q1.2 19.5 2 16.6 L5.4 3.4 Q6 1 8 1 Z" fill="url(#cgl)" clip-path="url(#ctop)"/></svg>
<div class="t" id="f41" style="left:894.3px;top:104.70px;font-size:10px;height:10px;line-height:10px;color:#262626;-webkit-text-stroke:0.1px currentColor;transform:scaleX(1.0115);transform-origin:0 0;">Copilot</div>
<svg class="abs" style="left:986.3px;top:135.3px;" width="8.4" height="6.4" viewBox="0 0 8.4 6.4"><path d="M1 1.9 L4.2 5.1 L7.4 1.9" fill="none" stroke="#333" stroke-width="1.2"/></svg>
<div class="abs" style="left:22px;top:149.5px;width:978px;height:23px;background:#fcf5d8;border-radius:6px;box-shadow:0 1px 1px rgba(0,0,0,.08)"></div>
<svg class="abs" style="left:31px;top:154px;" width="13" height="13" viewBox="0 0 13 13"><circle cx="6.5" cy="6.5" r="5.6" fill="#fff" stroke="#2f7fbf" stroke-width="1.1"/><rect x="5.9" y="5.5" width="1.3" height="4.5" fill="#2f7fbf"/><circle cx="6.55" cy="3.8" r=".8" fill="#2f7fbf"/></svg>
<div class="t" id="f42" style="left:49.52px;top:156.25px;font-size:9.5px;height:9.5px;line-height:9.5px;color:#222;font-weight:bold;transform:scaleX(0.8562);transform-origin:0 0;">更新あり</div>
<div class="t" id="f43" style="left:90.12px;top:156.25px;font-size:9.5px;height:9.5px;line-height:9.5px;color:#333;text-decoration:underline;text-underline-offset:1px;transform:scaleX(0.7512);transform-origin:0 0;"><span style="font-size:11.5px">Office </span>の更新プログラムをインストールする準備はできていますが、最初にいくつかのアプリを閉じる必要があります。</div>
<div class="abs" style="left:507.5px;top:151.5px;width:56px;height:19px;background:#fff;border:1px solid #9a9a9a;border-radius:4px"></div>
<div class="t" id="f44" style="left:513.52px;top:156.75px;font-size:9.5px;height:9.5px;line-height:9.5px;color:#222;;transform:scaleX(0.8390);transform-origin:0 0;">今すぐ更新</div>
<svg class="abs" style="left:985px;top:156px;" width="9" height="9" viewBox="0 0 9 9"><path d="M1 1 L8 8 M8 1 L1 8" stroke="#444" stroke-width="1.1"/></svg>
<div class="abs" style="left:16px;top:173px;width:992px;height:74px;background:linear-gradient(90deg,#f0ebe6 0%,#efebe6 60%,#eaedec 100%)"></div>
<div class="abs" style="left:22.8px;top:179px;width:77.5px;height:22.5px;background:#fff;border-radius:5px;box-shadow:0 0 0 0.5px #e3e3e3,0 1px 1px rgba(0,0,0,.08)"></div>
<div class="t" style="left:28px;top:185.50px;font-size:12px;height:12px;line-height:12px;color:#333;-webkit-text-stroke:0;">G2</div>
<svg class="abs" style="left:88.8px;top:187.3px;" width="8.4" height="6.4" viewBox="0 0 8.4 6.4"><path d="M1 1.9 L4.2 5.1 L7.4 1.9" fill="none" stroke="#333" stroke-width="1.2"/></svg>
<div class="abs" style="left:107px;top:186px;width:2.2px;height:2.2px;background:#333;border-radius:1px"></div>
<div class="abs" style="left:107px;top:190px;width:2.2px;height:2.2px;background:#333;border-radius:1px"></div>
<div class="abs" style="left:107px;top:194px;width:2.2px;height:2.2px;background:#333;border-radius:1px"></div>
<div class="abs" style="left:117px;top:179px;width:64px;height:22.5px;background:#fff;border-radius:5px;box-shadow:0 0 0 0.5px #e3e3e3,0 1px 1px rgba(0,0,0,.08)"></div>
<svg class="abs" style="left:121px;top:185px;" width="11" height="11" viewBox="0 0 11 11"><path d="M1 1 L10 10 M10 1 L1 10" stroke="#c8c8c8" stroke-width="1.1"/></svg>
<svg class="abs" style="left:138px;top:185px;" width="13" height="11" viewBox="0 0 13 11"><path d="M1 5.5 L4.5 9.5 L12 1.5" fill="none" stroke="#c8c8c8" stroke-width="1.1"/></svg>
<div class="t" style="left:157.5px;top:183.75px;font-size:13.5px;height:13.5px;line-height:13.5px;color:#333;font-family:'Liberation Serif',serif;letter-spacing:-1px;-webkit-text-stroke:0.4px currentColor;"><i>f</i><i>x</i></div>
<svg class="abs" style="left:172.5px;top:187.5px;" width="8" height="6" viewBox="0 0 8 6"><path d="M1 1.8 L4 4.8 L7 1.8" fill="none" stroke="#888" stroke-width="1"/></svg>
<div class="abs" style="left:186px;top:179px;width:814px;height:61px;background:#fff;border-radius:5px;box-shadow:0 0 0 0.5px #e3e3e3,0 1px 1px rgba(0,0,0,.08)"></div>
<div class="t" style="left:196px;top:185.68px;font-size:10.24px;height:10.24px;line-height:10.24px;color:#222;font-family:'Liberation Mono',monospace;-webkit-text-stroke:0;">=H4=IF(G1="","Set 1000",COUNTIF(OFFSET($D$2,0,0,VALUE("not_a_number")+COUNTA($D:$D)-1,1), "&gt;" &amp; G1))</div>
<svg class="abs" style="left:990px;top:185px;" width="9" height="6" viewBox="0 0 9 6"><path d="M1 5 L4.5 1.5 L8 5" fill="none" stroke="#333" stroke-width="1.1"/></svg>
<div class="abs" style="left:17px;top:246.5px;width:974px;height:485.5px;background:#fff"></div>
<div class="abs" style="left:17px;top:246.5px;width:974px;height:12.5px;background:#f0f0f0"></div>
<div class="abs" style="left:17px;top:259px;width:20.5px;height:473px;background:#f0f0f0"></div>
<div class="abs" style="left:353.5px;top:246.5px;width:139px;height:12.5px;background:#dedede"></div>
<div class="abs" style="left:17px;top:279px;width:20.5px;height:19px;background:#dedede"></div>
<div class="abs" style="left:17px;top:279px;width:974px;height:1px;background:#e3e3e3"></div>
<div class="abs" style="left:17px;top:298px;width:974px;height:1px;background:#e3e3e3"></div>
<div class="abs" style="left:17px;top:317px;width:974px;height:1px;background:#e3e3e3"></div>
<div class="abs" style="left:17px;top:337px;width:974px;height:1px;background:#e3e3e3"></div>
<div class="abs" style="left:17px;top:356px;width:974px;height:1px;background:#e3e3e3"></div>
<div class="abs" style="left:17px;top:375px;width:974px;height:1px;background:#e3e3e3"></div>
<div class="abs" style="left:17px;top:394px;width:974px;height:1px;background:#e3e3e3"></div>
<div class="abs" style="left:17px;top:414px;width:974px;height:1px;background:#e3e3e3"></div>
<div class="abs" style="left:17px;top:433px;width:974px;height:1px;background:#e3e3e3"></div>
<div class="abs" style="left:17px;top:452px;width:974px;height:1px;background:#e3e3e3"></div>
<div class="abs" style="left:17px;top:472px;width:974px;height:1px;background:#e3e3e3"></div>
<div class="abs" style="left:17px;top:491px;width:974px;height:1px;background:#e3e3e3"></div>
<div class="abs" style="left:17px;top:510px;width:974px;height:1px;background:#e3e3e3"></div>
<div class="abs" style="left:17px;top:524px;width:974px;height:1px;background:#e3e3e3"></div>
<div class="abs" style="left:17px;top:538px;width:974px;height:1px;background:#e3e3e3"></div>
<div class="abs" style="left:17px;top:552px;width:974px;height:1px;background:#e3e3e3"></div>
<div class="abs" style="left:17px;top:565px;width:974px;height:1px;background:#e3e3e3"></div>
<div class="abs" style="left:17px;top:579px;width:974px;height:1px;background:#e3e3e3"></div>
<div class="abs" style="left:17px;top:593px;width:974px;height:1px;background:#e3e3e3"></div>
<div class="abs" style="left:17px;top:607px;width:974px;height:1px;background:#e3e3e3"></div>
<div class="abs" style="left:17px;top:621px;width:974px;height:1px;background:#e3e3e3"></div>
<div class="abs" style="left:17px;top:634px;width:974px;height:1px;background:#e3e3e3"></div>
<div class="abs" style="left:17px;top:648px;width:974px;height:1px;background:#e3e3e3"></div>
<div class="abs" style="left:17px;top:662px;width:974px;height:1px;background:#e3e3e3"></div>
<div class="abs" style="left:17px;top:676px;width:974px;height:1px;background:#e3e3e3"></div>
<div class="abs" style="left:17px;top:690px;width:974px;height:1px;background:#e3e3e3"></div>
<div class="abs" style="left:17px;top:703px;width:974px;height:1px;background:#e3e3e3"></div>
<div class="abs" style="left:17px;top:717px;width:974px;height:1px;background:#e3e3e3"></div>
<div class="abs" style="left:17px;top:731px;width:974px;height:1px;background:#e3e3e3"></div>
<div class="abs" style="left:17px;top:258px;width:974px;height:1px;background:#d4d4d4"></div>
<div class="abs" style="left:125px;top:246.5px;width:1px;height:485.5px;background:#e3e3e3"></div>
<div class="abs" style="left:186px;top:246.5px;width:1px;height:485.5px;background:#e3e3e3"></div>
<div class="abs" style="left:235px;top:246.5px;width:1px;height:485.5px;background:#e3e3e3"></div>
<div class="abs" style="left:318px;top:246.5px;width:1px;height:485.5px;background:#e3e3e3"></div>
<div class="abs" style="left:353px;top:246.5px;width:1px;height:485.5px;background:#e3e3e3"></div>
<div class="abs" style="left:492px;top:246.5px;width:1px;height:485.5px;background:#e3e3e3"></div>
<div class="abs" style="left:546px;top:246.5px;width:1px;height:485.5px;background:#e3e3e3"></div>
<div class="abs" style="left:601px;top:246.5px;width:1px;height:485.5px;background:#e3e3e3"></div>
<div class="abs" style="left:655px;top:246.5px;width:1px;height:485.5px;background:#e3e3e3"></div>
<div class="abs" style="left:710px;top:246.5px;width:1px;height:485.5px;background:#e3e3e3"></div>
<div class="abs" style="left:765px;top:246.5px;width:1px;height:485.5px;background:#e3e3e3"></div>
<div class="abs" style="left:819px;top:246.5px;width:1px;height:485.5px;background:#e3e3e3"></div>
<div class="abs" style="left:874px;top:246.5px;width:1px;height:485.5px;background:#e3e3e3"></div>
<div class="abs" style="left:929px;top:246.5px;width:1px;height:485.5px;background:#e3e3e3"></div>
<div class="abs" style="left:983px;top:246.5px;width:1px;height:485.5px;background:#e3e3e3"></div>
<div class="abs" style="left:37px;top:246.5px;width:1px;height:485.5px;background:#d4d4d4"></div>
<div class="t" style="left:37.5px;width:88.0px;text-align:center;top:247.7px;font-size:10.5px;line-height:12px;height:12px;color:#444;-webkit-text-stroke:0">A</div>
<div class="t" style="left:125.5px;width:61.0px;text-align:center;top:247.7px;font-size:10.5px;line-height:12px;height:12px;color:#444;-webkit-text-stroke:0">B</div>
<div class="t" style="left:186.5px;width:49.0px;text-align:center;top:247.7px;font-size:10.5px;line-height:12px;height:12px;color:#444;-webkit-text-stroke:0">C</div>
<div class="t" style="left:235.5px;width:83.0px;text-align:center;top:247.7px;font-size:10.5px;line-height:12px;height:12px;color:#444;-webkit-text-stroke:0">D</div>
<div class="t" style="left:318.5px;width:35.0px;text-align:center;top:247.7px;font-size:10.5px;line-height:12px;height:12px;color:#444;-webkit-text-stroke:0">F</div>
<div class="t" style="left:353.5px;width:139.0px;text-align:center;top:247.7px;font-size:10.5px;line-height:12px;height:12px;color:#444;-webkit-text-stroke:0">G</div>
<div class="t" style="left:492.5px;width:54.0px;text-align:center;top:247.7px;font-size:10.5px;line-height:12px;height:12px;color:#444;-webkit-text-stroke:0">H</div>
<div class="t" style="left:546.5px;width:55.0px;text-align:center;top:247.7px;font-size:10.5px;line-height:12px;height:12px;color:#444;-webkit-text-stroke:0">I</div>
<div class="t" style="left:601.5px;width:54.0px;text-align:center;top:247.7px;font-size:10.5px;line-height:12px;height:12px;color:#444;-webkit-text-stroke:0">J</div>
<div class="t" style="left:655.5px;width:55.0px;text-align:center;top:247.7px;font-size:10.5px;line-height:12px;height:12px;color:#444;-webkit-text-stroke:0">K</div>
<div class="t" style="left:710.5px;width:55.0px;text-align:center;top:247.7px;font-size:10.5px;line-height:12px;height:12px;color:#444;-webkit-text-stroke:0">L</div>
<div class="t" style="left:765.5px;width:54.0px;text-align:center;top:247.7px;font-size:10.5px;line-height:12px;height:12px;color:#444;-webkit-text-stroke:0">M</div>
<div class="t" style="left:819.5px;width:55.0px;text-align:center;top:247.7px;font-size:10.5px;line-height:12px;height:12px;color:#444;-webkit-text-stroke:0">N</div>
<div class="t" style="left:874.5px;width:55.0px;text-align:center;top:247.7px;font-size:10.5px;line-height:12px;height:12px;color:#444;-webkit-text-stroke:0">O</div>
<div class="t" style="left:929.5px;width:54.0px;text-align:center;top:247.7px;font-size:10.5px;line-height:12px;height:12px;color:#444;-webkit-text-stroke:0">P</div>
<div class="t" style="left:16.5px;width:20px;text-align:center;top:263.50px;font-size:10.5px;line-height:12px;height:12px;color:#444;-webkit-text-stroke:0">1</div>
<div class="t" style="left:16.5px;width:20px;text-align:center;top:283.00px;font-size:10.5px;line-height:12px;height:12px;color:#444;-webkit-text-stroke:0">2</div>
<div class="t" style="left:16.5px;width:20px;text-align:center;top:302.00px;font-size:10.5px;line-height:12px;height:12px;color:#444;-webkit-text-stroke:0">3</div>
<div class="t" style="left:16.5px;width:20px;text-align:center;top:321.50px;font-size:10.5px;line-height:12px;height:12px;color:#444;-webkit-text-stroke:0">4</div>
<div class="t" style="left:16.5px;width:20px;text-align:center;top:341.00px;font-size:10.5px;line-height:12px;height:12px;color:#444;-webkit-text-stroke:0">5</div>
<div class="t" style="left:16.5px;width:20px;text-align:center;top:360.00px;font-size:10.5px;line-height:12px;height:12px;color:#444;-webkit-text-stroke:0">6</div>
<div class="t" style="left:16.5px;width:20px;text-align:center;top:379.00px;font-size:10.5px;line-height:12px;height:12px;color:#444;-webkit-text-stroke:0">7</div>
<div class="t" style="left:16.5px;width:20px;text-align:center;top:398.50px;font-size:10.5px;line-height:12px;height:12px;color:#444;-webkit-text-stroke:0">8</div>
<div class="t" style="left:16.5px;width:20px;text-align:center;top:418.00px;font-size:10.5px;line-height:12px;height:12px;color:#444;-webkit-text-stroke:0">9</div>
<div class="t" style="left:16.5px;width:20px;text-align:center;top:437.00px;font-size:10.5px;line-height:12px;height:12px;color:#444;-webkit-text-stroke:0">10</div>
<div class="t" style="left:16.5px;width:20px;text-align:center;top:456.50px;font-size:10.5px;line-height:12px;height:12px;color:#444;-webkit-text-stroke:0">11</div>
<div class="t" style="left:16.5px;width:20px;text-align:center;top:476.00px;font-size:10.5px;line-height:12px;height:12px;color:#444;-webkit-text-stroke:0">12</div>
<div class="t" style="left:16.5px;width:20px;text-align:center;top:495.00px;font-size:10.5px;line-height:12px;height:12px;color:#444;-webkit-text-stroke:0">13</div>
<div class="t" style="left:16.5px;width:20px;text-align:center;top:512.20px;font-size:10.5px;line-height:12px;height:12px;color:#444;-webkit-text-stroke:0">14</div>
<div class="t" style="left:16.5px;width:20px;text-align:center;top:526.20px;font-size:10.5px;line-height:12px;height:12px;color:#444;-webkit-text-stroke:0">15</div>
<div class="t" style="left:16.5px;width:20px;text-align:center;top:540.20px;font-size:10.5px;line-height:12px;height:12px;color:#444;-webkit-text-stroke:0">16</div>
<div class="t" style="left:16.5px;width:20px;text-align:center;top:553.70px;font-size:10.5px;line-height:12px;height:12px;color:#444;-webkit-text-stroke:0">17</div>
<div class="t" style="left:16.5px;width:20px;text-align:center;top:567.20px;font-size:10.5px;line-height:12px;height:12px;color:#444;-webkit-text-stroke:0">18</div>
<div class="t" style="left:16.5px;width:20px;text-align:center;top:581.20px;font-size:10.5px;line-height:12px;height:12px;color:#444;-webkit-text-stroke:0">19</div>
<div class="t" style="left:16.5px;width:20px;text-align:center;top:595.20px;font-size:10.5px;line-height:12px;height:12px;color:#444;-webkit-text-stroke:0">20</div>
<div class="t" style="left:16.5px;width:20px;text-align:center;top:609.20px;font-size:10.5px;line-height:12px;height:12px;color:#444;-webkit-text-stroke:0">21</div>
<div class="t" style="left:16.5px;width:20px;text-align:center;top:622.70px;font-size:10.5px;line-height:12px;height:12px;color:#444;-webkit-text-stroke:0">22</div>
<div class="t" style="left:16.5px;width:20px;text-align:center;top:636.20px;font-size:10.5px;line-height:12px;height:12px;color:#444;-webkit-text-stroke:0">23</div>
<div class="t" style="left:16.5px;width:20px;text-align:center;top:650.20px;font-size:10.5px;line-height:12px;height:12px;color:#444;-webkit-text-stroke:0">24</div>
<div class="t" style="left:16.5px;width:20px;text-align:center;top:664.20px;font-size:10.5px;line-height:12px;height:12px;color:#444;-webkit-text-stroke:0">25</div>
<div class="t" style="left:16.5px;width:20px;text-align:center;top:678.20px;font-size:10.5px;line-height:12px;height:12px;color:#444;-webkit-text-stroke:0">26</div>
<div class="t" style="left:16.5px;width:20px;text-align:center;top:691.70px;font-size:10.5px;line-height:12px;height:12px;color:#444;-webkit-text-stroke:0">27</div>
<div class="t" style="left:16.5px;width:20px;text-align:center;top:705.20px;font-size:10.5px;line-height:12px;height:12px;color:#444;-webkit-text-stroke:0">28</div>
<div class="t" style="left:16.5px;width:20px;text-align:center;top:719.20px;font-size:10.5px;line-height:12px;height:12px;color:#444;-webkit-text-stroke:0">29</div>
<svg class="abs" style="left:28px;top:249px;" width="8" height="8" viewBox="0 0 8 8"><path d="M8 0 V8 H0 Z" fill="#d8d8d8"/></svg>
<div class="abs" style="left:353.5px;top:258px;width:139px;height:1.5px;background:#1e6b3e"></div>
<div class="abs" style="left:991px;top:246.5px;width:18px;height:485.5px;background:#f0efed"></div>
<div class="abs" style="left:37.5px;top:259px;width:281px;height:20px;background:#f9c99c"></div>
<div class="abs" style="left:125px;top:259px;width:1px;height:20px;background:#e0b48a"></div>
<div class="abs" style="left:186px;top:259px;width:1px;height:20px;background:#e0b48a"></div>
<div class="abs" style="left:235px;top:259px;width:1px;height:20px;background:#e0b48a"></div>
<div class="t" id="f45" style="left:41.1px;top:262.50px;font-size:12px;height:12px;line-height:12px;color:#6a5548;;transform:scaleX(1.0083);transform-origin:0 0;">日付</div>
<div class="t" id="f46" style="left:127.9px;top:262.50px;font-size:12px;height:12px;line-height:12px;color:#6a5548;;transform:scaleX(1.0194);transform-origin:0 0;">担当者</div>
<div class="t" id="f47" style="left:189.4px;top:262.50px;font-size:12px;height:12px;line-height:12px;color:#6a5548;;transform:scaleX(1.0500);transform-origin:0 0;">地域</div>
<div class="t" id="f48" style="left:238.4px;top:262.50px;font-size:12px;height:12px;line-height:12px;color:#6a5548;;transform:scaleX(0.9488);transform-origin:0 0;">売上額（千円）</div>
<div class="t" style="left:41px;width:81.5px;text-align:right;top:282.00px;font-size:13px;line-height:14px;height:14px;color:#333">2025-01-01</div>
<div class="t" id="f49" style="left:127.92px;top:283.25px;font-size:11.5px;height:11.5px;line-height:11.5px;color:#333;;transform:scaleX(0.9854);transform-origin:0 0;">鈴木</div>
<div class="t" id="f50" style="left:189.43px;top:283.25px;font-size:11.5px;height:11.5px;line-height:11.5px;color:#333;;transform:scaleX(0.9646);transform-origin:0 0;">関東</div>
<div class="t" style="left:240px;width:72.2px;text-align:right;top:282.00px;font-size:13px;line-height:14px;height:14px;color:#333">850</div>
<div class="t" style="left:41px;width:81.5px;text-align:right;top:301.00px;font-size:13px;line-height:14px;height:14px;color:#333">2025-01-08</div>
<div class="t" id="f51" style="left:127.92px;top:302.25px;font-size:11.5px;height:11.5px;line-height:11.5px;color:#333;;transform:scaleX(0.9854);transform-origin:0 0;">佐藤</div>
<div class="t" id="f52" style="left:189.43px;top:302.25px;font-size:11.5px;height:11.5px;line-height:11.5px;color:#333;;transform:scaleX(0.9646);transform-origin:0 0;">関西</div>
<div class="t" style="left:240px;width:72.2px;text-align:right;top:301.00px;font-size:13px;line-height:14px;height:14px;color:#333">1,200</div>
<div class="t" style="left:41px;width:81.5px;text-align:right;top:320.50px;font-size:13px;line-height:14px;height:14px;color:#333">2025-01-15</div>
<div class="t" id="f53" style="left:127.92px;top:321.75px;font-size:11.5px;height:11.5px;line-height:11.5px;color:#333;;transform:scaleX(0.9854);transform-origin:0 0;">田中</div>
<div class="t" id="f54" style="left:189.43px;top:321.75px;font-size:11.5px;height:11.5px;line-height:11.5px;color:#333;;transform:scaleX(0.9646);transform-origin:0 0;">中部</div>
<div class="t" style="left:240px;width:72.2px;text-align:right;top:320.50px;font-size:13px;line-height:14px;height:14px;color:#333">430</div>
<div class="t" style="left:41px;width:81.5px;text-align:right;top:340.00px;font-size:13px;line-height:14px;height:14px;color:#333">2025-01-22</div>
<div class="t" id="f55" style="left:127.92px;top:341.25px;font-size:11.5px;height:11.5px;line-height:11.5px;color:#333;;transform:scaleX(0.9854);transform-origin:0 0;">山田</div>
<div class="t" id="f56" style="left:189.43px;top:341.25px;font-size:11.5px;height:11.5px;line-height:11.5px;color:#333;;transform:scaleX(0.9646);transform-origin:0 0;">東北</div>
<div class="t" style="left:240px;width:72.2px;text-align:right;top:340.00px;font-size:13px;line-height:14px;height:14px;color:#333">1,600</div>
<div class="t" style="left:41px;width:81.5px;text-align:right;top:359.00px;font-size:13px;line-height:14px;height:14px;color:#333">2025-01-29</div>
<div class="t" id="f57" style="left:127.92px;top:360.25px;font-size:11.5px;height:11.5px;line-height:11.5px;color:#333;;transform:scaleX(0.9854);transform-origin:0 0;">鈴木</div>
<div class="t" id="f58" style="left:189.43px;top:360.25px;font-size:11.5px;height:11.5px;line-height:11.5px;color:#333;;transform:scaleX(0.9646);transform-origin:0 0;">関東</div>
<div class="t" style="left:240px;width:72.2px;text-align:right;top:359.00px;font-size:13px;line-height:14px;height:14px;color:#333">950</div>
<div class="t" style="left:41px;width:81.5px;text-align:right;top:378.00px;font-size:13px;line-height:14px;height:14px;color:#333">2025-02-05</div>
<div class="t" id="f59" style="left:127.92px;top:379.25px;font-size:11.5px;height:11.5px;line-height:11.5px;color:#333;;transform:scaleX(0.9854);transform-origin:0 0;">佐藤</div>
<div class="t" id="f60" style="left:189.43px;top:379.25px;font-size:11.5px;height:11.5px;line-height:11.5px;color:#333;;transform:scaleX(0.9646);transform-origin:0 0;">関西</div>
<div class="t" style="left:240px;width:72.2px;text-align:right;top:378.00px;font-size:13px;line-height:14px;height:14px;color:#333">1,100</div>
<div class="t" style="left:41px;width:81.5px;text-align:right;top:397.50px;font-size:13px;line-height:14px;height:14px;color:#333">2025-02-12</div>
<div class="t" id="f61" style="left:127.92px;top:398.75px;font-size:11.5px;height:11.5px;line-height:11.5px;color:#333;;transform:scaleX(0.9854);transform-origin:0 0;">田中</div>
<div class="t" id="f62" style="left:189.43px;top:398.75px;font-size:11.5px;height:11.5px;line-height:11.5px;color:#333;;transform:scaleX(0.9646);transform-origin:0 0;">中部</div>
<div class="t" style="left:240px;width:72.2px;text-align:right;top:397.50px;font-size:13px;line-height:14px;height:14px;color:#333">760</div>
<div class="t" style="left:41px;width:81.5px;text-align:right;top:417.00px;font-size:13px;line-height:14px;height:14px;color:#333">2025-02-19</div>
<div class="t" id="f63" style="left:127.92px;top:418.25px;font-size:11.5px;height:11.5px;line-height:11.5px;color:#333;;transform:scaleX(0.9854);transform-origin:0 0;">山田</div>
<div class="t" id="f64" style="left:189.43px;top:418.25px;font-size:11.5px;height:11.5px;line-height:11.5px;color:#333;;transform:scaleX(0.9646);transform-origin:0 0;">東北</div>
<div class="t" style="left:240px;width:72.2px;text-align:right;top:417.00px;font-size:13px;line-height:14px;height:14px;color:#333">1,400</div>
<div class="t" style="left:41px;width:81.5px;text-align:right;top:436.00px;font-size:13px;line-height:14px;height:14px;color:#333">2025-02-26</div>
<div class="t" id="f65" style="left:127.92px;top:437.25px;font-size:11.5px;height:11.5px;line-height:11.5px;color:#333;;transform:scaleX(0.9854);transform-origin:0 0;">鈴木</div>
<div class="t" id="f66" style="left:189.43px;top:437.25px;font-size:11.5px;height:11.5px;line-height:11.5px;color:#333;;transform:scaleX(0.9646);transform-origin:0 0;">関東</div>
<div class="t" style="left:240px;width:72.2px;text-align:right;top:436.00px;font-size:13px;line-height:14px;height:14px;color:#333">300</div>
<div class="t" style="left:41px;width:81.5px;text-align:right;top:455.50px;font-size:13px;line-height:14px;height:14px;color:#333">2025-03-05</div>
<div class="t" id="f67" style="left:127.92px;top:456.75px;font-size:11.5px;height:11.5px;line-height:11.5px;color:#333;;transform:scaleX(0.9854);transform-origin:0 0;">佐藤</div>
<div class="t" id="f68" style="left:189.43px;top:456.75px;font-size:11.5px;height:11.5px;line-height:11.5px;color:#333;;transform:scaleX(0.9646);transform-origin:0 0;">関西</div>
<div class="t" style="left:240px;width:72.2px;text-align:right;top:455.50px;font-size:13px;line-height:14px;height:14px;color:#333">2,200</div>
<div class="t" style="left:41px;width:81.5px;text-align:right;top:475.00px;font-size:13px;line-height:14px;height:14px;color:#333">2025-03-12</div>
<div class="t" id="f69" style="left:127.92px;top:476.25px;font-size:11.5px;height:11.5px;line-height:11.5px;color:#333;;transform:scaleX(0.9854);transform-origin:0 0;">田中</div>
<div class="t" id="f70" style="left:189.43px;top:476.25px;font-size:11.5px;height:11.5px;line-height:11.5px;color:#333;;transform:scaleX(0.9646);transform-origin:0 0;">中部</div>
<div class="t" style="left:240px;width:72.2px;text-align:right;top:475.00px;font-size:13px;line-height:14px;height:14px;color:#333">670</div>
<div class="t" style="left:41px;width:81.5px;text-align:right;top:494.00px;font-size:13px;line-height:14px;height:14px;color:#333">2025-03-19</div>
<div class="t" id="f71" style="left:127.92px;top:495.25px;font-size:11.5px;height:11.5px;line-height:11.5px;color:#333;;transform:scaleX(0.9854);transform-origin:0 0;">山田</div>
<div class="t" id="f72" style="left:189.43px;top:495.25px;font-size:11.5px;height:11.5px;line-height:11.5px;color:#333;;transform:scaleX(0.9646);transform-origin:0 0;">東北</div>
<div class="t" style="left:240px;width:72.2px;text-align:right;top:494.00px;font-size:13px;line-height:14px;height:14px;color:#333">980</div>
<div class="abs" style="left:37px;top:279px;width:282px;height:1px;background:#3a3a3a"></div>
<div class="abs" style="left:37px;top:298px;width:282px;height:1px;background:#3a3a3a"></div>
<div class="abs" style="left:37px;top:317px;width:282px;height:1px;background:#3a3a3a"></div>
<div class="abs" style="left:37px;top:337px;width:282px;height:1px;background:#3a3a3a"></div>
<div class="abs" style="left:37px;top:356px;width:282px;height:1px;background:#3a3a3a"></div>
<div class="abs" style="left:37px;top:375px;width:282px;height:1px;background:#3a3a3a"></div>
<div class="abs" style="left:37px;top:394px;width:282px;height:1px;background:#3a3a3a"></div>
<div class="abs" style="left:37px;top:414px;width:282px;height:1px;background:#3a3a3a"></div>
<div class="abs" style="left:37px;top:433px;width:282px;height:1px;background:#3a3a3a"></div>
<div class="abs" style="left:37px;top:452px;width:282px;height:1px;background:#3a3a3a"></div>
<div class="abs" style="left:37px;top:472px;width:282px;height:1px;background:#3a3a3a"></div>
<div class="abs" style="left:37px;top:491px;width:282px;height:1px;background:#3a3a3a"></div>
<div class="abs" style="left:37px;top:510px;width:282px;height:1px;background:#3a3a3a"></div>
<div class="abs" style="left:37px;top:279px;width:1px;height:232px;background:#3a3a3a"></div>
<div class="abs" style="left:125px;top:279px;width:1px;height:232px;background:#3a3a3a"></div>
<div class="abs" style="left:186px;top:279px;width:1px;height:232px;background:#3a3a3a"></div>
<div class="abs" style="left:235px;top:279px;width:1px;height:232px;background:#3a3a3a"></div>
<div class="abs" style="left:318px;top:279px;width:1px;height:232px;background:#3a3a3a"></div>
<div class="abs" style="left:354px;top:259px;width:138px;height:20px;background:#c6efce"></div>
<div class="t" id="f73" style="left:356.9px;top:263.00px;font-size:12px;height:12px;line-height:12px;color:#1e7b3a;;transform:scaleX(1.0404);transform-origin:0 0;">100万円以上の売上件数</div>
<div class="abs" style="left:353px;top:258px;width:140px;height:2px;background:#23764a"></div>
<div class="abs" style="left:353px;top:258px;width:2px;height:41.5px;background:#23764a"></div>
<div class="abs" style="left:491px;top:258px;width:2px;height:41.5px;background:#23764a"></div>
<div class="abs" style="left:353px;top:278px;width:140px;height:2px;background:#23764a"></div>
<div class="abs" style="left:353px;top:297.5px;width:138px;height:2px;background:#23764a"></div>
<div class="abs" style="left:489.5px;top:296px;width:5px;height:5px;background:#23764a;border:1px solid #fff"></div>
<svg class="abs" style="left:355px;top:280px;" width="4" height="4" viewBox="0 0 4 4"><path d="M0 0 H4 L0 4 Z" fill="#1e7b3a"/></svg>
<div class="t" id="f74" style="left:398.38px;top:282.25px;font-size:12.5px;height:12.5px;line-height:12.5px;color:#262626;-webkit-text-stroke:0.05px currentColor;transform:scaleX(0.9752);transform-origin:0 0;">#VALUE!</div>
<div class="abs" style="left:495px;top:260px;width:21px;height:20px;background:#fff;border:1.3px solid #707070;border-radius:5px;box-shadow:0 1px 2px rgba(0,0,0,.12)"></div>
<svg class="abs" style="left:499px;top:263px;" width="14" height="14" viewBox="0 0 14 14"><path d="M7 1.2 L8 3.6 L10.4 4.5 L8 5.4 L7 7.8 L6 5.4 L3.6 4.5 L6 3.6 Z" fill="#333"/><path d="M10 6.5 L11.6 8 L10 9.6 L8.4 8 Z" fill="#333"/><path d="M1.5 8 L3.5 5.8 M3.2 10.2 L6.2 7 M1.8 11.8 L3.8 9.6 M5.5 11.5 L7.2 9.6" stroke="#444" stroke-width="1.1" stroke-linecap="round"/></svg>
<div class="abs" style="left:327px;top:280px;width:24px;height:17.5px;background:#6fbf9a"></div>
<svg class="abs" style="left:328.5px;top:282px;" width="13" height="12" viewBox="0 0 13 12"><path d="M6.5 1.2 L12.2 11 H0.8 Z" fill="#f5d76e" stroke="#5a4a10" stroke-width="1.2" stroke-linejoin="round"/><rect x="5.85" y="4.2" width="1.3" height="3.8" fill="#5a4a10"/><rect x="5.85" y="8.7" width="1.3" height="1.3" fill="#5a4a10"/></svg>
<svg class="abs" style="left:345px;top:287px;" width="5" height="3" viewBox="0 0 5 3"><path d="M0 0 H5 L2.5 3 Z" fill="#333"/></svg>
<div class="abs" style="left:327.5px;top:297.5px;width:151.5px;height:114px;background:#fff;border:1px solid #d0d0d0;box-shadow:1px 2px 4px rgba(0,0,0,.22)"></div>
<div class="abs" style="left:349px;top:300px;width:129px;height:20px;background:#dcdce6"></div>
<div class="t" id="f75" style="left:353.52px;top:305.25px;font-size:9.5px;height:9.5px;line-height:9.5px;color:#5c5c5c;-webkit-text-stroke:0.05px currentColor;transform:scaleX(0.7590);transform-origin:0 0;">値のエラー</div>
<div class="t" id="f76" style="left:353.52px;top:323.75px;font-size:9.5px;height:9.5px;line-height:9.5px;color:#5c5c5c;-webkit-text-stroke:0.05px currentColor;transform:scaleX(0.7728);transform-origin:0 0;">このエラーに関するヘルプ(<u>H</u>)</div>
<div class="t" id="f77" style="left:353.52px;top:341.75px;font-size:9.5px;height:9.5px;line-height:9.5px;color:#5c5c5c;-webkit-text-stroke:0.05px currentColor;transform:scaleX(0.9006);transform-origin:0 0;">計算の過程を表示(<u>C</u>)</div>
<div class="abs" style="left:353px;top:356px;width:124px;height:1px;background:#e6e6e6"></div>
<div class="t" id="f78" style="left:353.52px;top:360.75px;font-size:9.5px;height:9.5px;line-height:9.5px;color:#5c5c5c;-webkit-text-stroke:0.05px currentColor;transform:scaleX(0.8198);transform-origin:0 0;">エラーを無視する(<u>I</u>)</div>
<div class="t" id="f79" style="left:353.52px;top:378.75px;font-size:9.5px;height:9.5px;line-height:9.5px;color:#5c5c5c;-webkit-text-stroke:0.05px currentColor;transform:scaleX(0.9001);transform-origin:0 0;">数式バーで編集(<u>F</u>)</div>
<div class="abs" style="left:353px;top:393px;width:124px;height:1px;background:#e6e6e6"></div>
<div class="t" id="f80" style="left:353.52px;top:397.75px;font-size:9.5px;height:9.5px;line-height:9.5px;color:#5c5c5c;-webkit-text-stroke:0.05px currentColor;transform:scaleX(0.7347);transform-origin:0 0;">エラー チェック オプション(<u>O</u>)...</div>
<div class="abs" style="left:322px;top:273.3px;width:31.7px;height:26px;border:3px solid #d1131f;border-radius:8px"></div>
<svg class="abs" style="left:463px;top:314px;" width="12" height="17" viewBox="0 0 12 17"><path d="M1 1 V13.5 L4 10.8 L6.3 15.5 L8.3 14.5 L6 10 H10 Z" fill="#fff" stroke="#333" stroke-width="1" stroke-linejoin="round"/></svg>
<div class="abs" style="left:991px;top:246.5px;width:17px;height:486px;background:#f9f9f9"></div>
<svg class="abs" style="left:995px;top:249px;" width="9" height="7" viewBox="0 0 9 7"><path d="M4.5 0.5 L8.5 6.5 H0.5 Z" fill="#666"/></svg>
<div class="abs" style="left:996px;top:259px;width:7px;height:462px;background:#6e6e6e;border-radius:4px"></div>
<svg class="abs" style="left:995px;top:726px;" width="9" height="7" viewBox="0 0 9 7"><path d="M0.5 0.5 H8.5 L4.5 6.5 Z" fill="#666"/></svg>
<div class="abs" style="left:16px;top:732px;width:992px;height:24.5px;background:#efebe7"></div>
<svg class="abs" style="left:36px;top:739px;" width="7" height="10" viewBox="0 0 7 10"><path d="M5.5 1 L1.5 5 L5.5 9" fill="none" stroke="#999" stroke-width="1.1"/></svg>
<svg class="abs" style="left:61px;top:739px;" width="7" height="10" viewBox="0 0 7 10"><path d="M1.5 1 L5.5 5 L1.5 9" fill="none" stroke="#999" stroke-width="1.1"/></svg>
<div class="abs" style="left:105px;top:732px;width:104px;height:19px;background:#fff;border-radius:0 0 5px 5px;box-shadow:0 1px 1px rgba(0,0,0,.08)"></div>
<div class="t" id="f81" style="left:115.4px;top:737.30px;font-size:12px;height:12px;line-height:12px;color:#222;-webkit-text-stroke:0;transform:scaleX(0.9489);transform-origin:0 0;">SalesDashboard</div>
<div class="abs" style="left:111px;top:749.5px;width:92.5px;height:2px;background:#1e6b3e;border-radius:1px"></div>
<div class="abs" style="left:213px;top:737px;width:1px;height:13px;background:#c8c8c8"></div>
<svg class="abs" style="left:244px;top:739px;" width="11" height="11" viewBox="0 0 11 11"><path d="M5.5 1 V10 M1 5.5 H10" stroke="#333" stroke-width="1.1"/></svg>
<div class="abs" style="left:613.5px;top:741px;width:1.6px;height:1.6px;background:#444;border-radius:1px"></div>
<div class="abs" style="left:613.5px;top:745px;width:1.6px;height:1.6px;background:#444;border-radius:1px"></div>
<div class="abs" style="left:613.5px;top:749px;width:1.6px;height:1.6px;background:#444;border-radius:1px"></div>
<div class="abs" style="left:628px;top:734px;width:363px;height:20px;background:#f5f4f2;border-radius:3px"></div>
<svg class="abs" style="left:630px;top:739px;" width="7" height="9" viewBox="0 0 7 9"><path d="M6 0.5 V8.5 L0.5 4.5 Z" fill="#666"/></svg>
<div class="abs" style="left:638px;top:740px;width:324px;height:7px;background:#6e6e6e;border-radius:4px"></div>
<svg class="abs" style="left:983px;top:739px;" width="7" height="9" viewBox="0 0 7 9"><path d="M1 0.5 V8.5 L6.5 4.5 Z" fill="#666"/></svg>
<div class="abs" style="left:16px;top:756.5px;width:992px;height:18px;background:#f6f6f5"></div>
<div class="t" id="f82" style="left:24.52px;top:760.75px;font-size:9.5px;height:9.5px;line-height:9.5px;color:#333;;transform:scaleX(0.9238);transform-origin:0 0;">準備完了</div>
<svg class="abs" style="left:77px;top:759px;" width="12" height="13" viewBox="0 0 12 13"><circle cx="6" cy="2.2" r="1.5" fill="none" stroke="#333" stroke-width=".9"/><path d="M1 5 H11 M6 5 V8.5 L3 12 M6 8.5 L9 12" fill="none" stroke="#333" stroke-width=".9"/></svg>
<div class="t" id="f83" style="left:89.53px;top:760.75px;font-size:9.5px;height:9.5px;line-height:9.5px;color:#333;;transform:scaleX(0.7403);transform-origin:0 0;">アクセシビリティ: 問題ありません</div>
<div class="abs" style="left:764.5px;top:757.5px;width:30px;height:15px;background:#dedede;border-radius:2px"></div>
<svg class="abs" style="left:773px;top:759px;" width="12" height="12" viewBox="0 0 12 12"><rect x=".5" y=".5" width="11" height="11" fill="none" stroke="#333" stroke-width="1"/><path d="M4 .5 V11.5 M8 .5 V11.5 M.5 4 H11.5 M.5 8 H11.5" stroke="#333" stroke-width="1"/></svg>
<svg class="abs" style="left:804.5px;top:759px;" width="12" height="12" viewBox="0 0 12 12"><rect x=".5" y=".5" width="11" height="11" fill="none" stroke="#333" stroke-width="1"/><rect x="3" y="2.5" width="6" height="7" fill="none" stroke="#333" stroke-width="1"/></svg>
<svg class="abs" style="left:834.5px;top:759px;" width="12" height="12" viewBox="0 0 12 12"><path d="M.5 11.5 V.5 H11.5 V11.5 M.5 7.5 H5.5 V.5 M5.5 7.5 H11.5" fill="none" stroke="#333" stroke-width="1"/></svg>
<div class="abs" style="left:861px;top:765px;width:6px;height:1.2px;background:#555"></div>
<div class="abs" style="left:871px;top:765px;width:76px;height:1px;background:#888"></div>
<div class="abs" style="left:908px;top:760px;width:3px;height:10px;background:#444;border-radius:1px"></div>
<svg class="abs" style="left:951px;top:761px;" width="7" height="7" viewBox="0 0 7 7"><path d="M3.5 0 V7 M0 3.5 H7" stroke="#444" stroke-width="1"/></svg>
<div class="t" id="f84" style="left:967.42px;top:759.75px;font-size:11.5px;height:11.5px;line-height:11.5px;color:#333;-webkit-text-stroke:0.1px currentColor;transform:scaleX(0.8548);transform-origin:0 0;">100%</div>
</div><div class="abs" style="left:15px;top:11px;width:994px;height:764px;border:1px solid #5f8a70;border-radius:8px;box-shadow:inset 0 0 0 1px rgba(215,245,230,.9)"></div>
</body></html>
